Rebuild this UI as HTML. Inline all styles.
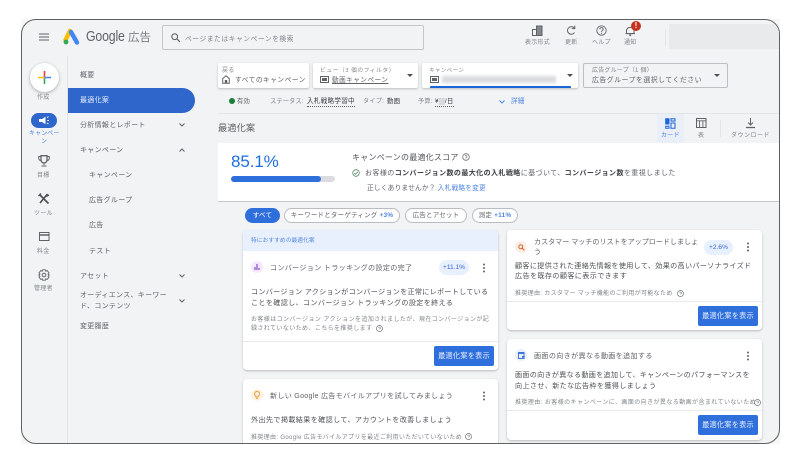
<!DOCTYPE html>
<html lang="ja"><head><meta charset="utf-8">
<style>
html,body{margin:0;padding:0;background:#fff;width:800px;height:464px;overflow:hidden}
body{font-family:"Liberation Sans","Noto Sans CJK JP",sans-serif;position:relative}
#o{position:absolute;left:21px;top:19px;width:759px;height:425px;background:#f6f6f6;filter:blur(.3px)}
#f{position:absolute;left:0;top:0;width:757px;height:423px;border:1px solid #5f6061;border-radius:15px;background:#f1f3f5;overflow:hidden}
#c{position:absolute;left:-22px;top:-20px;width:800px;height:464px}
.t{position:absolute;white-space:nowrap;transform:translateY(calc(-50% + 2px));line-height:12px;color:#5f6368;font-size:7px;letter-spacing:.25px}
.b{position:absolute;box-sizing:border-box}
.card{position:absolute;background:#fff;border-radius:4px;box-shadow:0 1px 2px rgba(60,64,67,.3)}
.n{font-size:7px;letter-spacing:.3px;color:#5f6368}
.r{font-size:6px;letter-spacing:.4px;color:#80868b}
.d{font-size:7.1px;letter-spacing:.28px;color:#4d5156}
.rl{font-size:6px;letter-spacing:.25px;color:#80868b;text-align:center}
.btn{position:absolute;width:60px;height:20px;background:#2f6fdc;border-radius:2px;color:#e8f0fe;font-size:7.2px;letter-spacing:.2px;line-height:20px;text-align:center}
.chip{position:absolute;height:15px;line-height:14px;border:1px solid #b9bcc0;border-radius:8px;box-sizing:border-box;background:#fff;color:#5f6368;font-size:6.5px;letter-spacing:.2px;text-align:center;white-space:nowrap}
.up{position:absolute;height:15px;background:#e8f0fe;border-radius:8px;color:#3367d6;font-size:6.6px;line-height:15px;text-align:center}
.k{position:absolute;width:2px;height:2px;background:#5f6368;border-radius:1px;box-shadow:0 -3.5px 0 #5f6368,0 3.5px 0 #5f6368}
.ic{position:absolute;width:12px;height:12px;border-radius:6px}
svg{position:absolute;overflow:visible}
.blue{color:#4f86e0}
</style></head><body>
<div id="o"><div id="f"><div id="c">

<!-- header -->
<svg style="left:39px;top:33px" width="10" height="8"><path d="M0 1H10M0 4H10M0 7H10" stroke="#5f6368" stroke-width="1"/></svg>
<svg style="left:63px;top:30px" width="17" height="15" viewBox="0 0 17 15"><path d="M7 1L2.5 10" stroke="#fbbc04" stroke-width="4.4" stroke-linecap="round"/><path d="M8 2L14 12.5" stroke="#4285f4" stroke-width="4.4" stroke-linecap="round"/><circle cx="3" cy="12" r="2.4" fill="#34a853"/></svg>
<div class="t" style="left:86px;top:37px;font-size:14.5px;letter-spacing:-.2px;color:#5f6368;transform:translateY(-50%) scaleX(.85);transform-origin:left center">Google</div>
<div class="t" style="left:128px;top:36px;font-size:11.5px;color:#7a7e83;letter-spacing:0">広告</div>
<div class="b" style="left:162px;top:25px;width:262px;height:25px;border:1px solid #c4c7ca;border-radius:2px"></div>
<svg style="left:171px;top:33px" width="10" height="10"><circle cx="3.7" cy="3.7" r="2.9" fill="none" stroke="#5f6368" stroke-width="1.1"/><path d="M5.8 5.8L9 9" stroke="#5f6368" stroke-width="1.2"/></svg>
<div class="t" style="left:185px;top:38px;font-size:6.8px;letter-spacing:.5px;color:#80868b">ページまたはキャンペーンを検索</div>

<svg style="left:532px;top:25px" width="11" height="11"><path d="M.5 4.5H4.5V10.5H.5ZM4.5 1H10V10.5H4.5Z" fill="none" stroke="#5f6368" stroke-width="1"/><path d="M5 1.5H9.5V10H5Z" fill="#5f6368" opacity=".75"/></svg>
<div class="t rl" style="left:525px;top:41px">表示形式</div>
<svg style="left:566px;top:25px" width="11" height="11"><path d="M8.5 7.5A3.8 3.8 0 1 1 8.2 3" fill="none" stroke="#5f6368" stroke-width="1"/><path d="M8.8 .6V3.6H5.8" fill="none" stroke="#5f6368" stroke-width="1"/></svg>
<div class="t rl" style="left:565px;top:41px">更新</div>
<svg style="left:596px;top:25px" width="11" height="11"><circle cx="5.5" cy="5.5" r="4.7" fill="none" stroke="#5f6368" stroke-width=".9"/><path d="M3.9 4.2A1.6 1.6 0 1 1 6.2 5.6C5.6 6 5.5 6.2 5.5 6.9" fill="none" stroke="#5f6368" stroke-width=".9"/><circle cx="5.5" cy="8.2" r=".6" fill="#5f6368"/></svg>
<div class="t rl" style="left:592px;top:41px">ヘルプ</div>
<svg style="left:625px;top:25px" width="11" height="11"><path d="M1.5 8.5V5A4 4 0 0 1 9 5V8.5Z" fill="none" stroke="#5f6368" stroke-width="1"/><path d="M.5 8.6H10" stroke="#5f6368"/><circle cx="5.2" cy="10.3" r="1" fill="#5f6368"/></svg>
<div class="b" style="left:631px;top:21px;width:10px;height:10px;border-radius:5px;background:#c5301f;color:#fff;font-size:8px;font-weight:bold;line-height:10px;text-align:center">!</div>
<div class="t rl" style="left:624px;top:41px">通知</div>
<div class="b" style="left:665px;top:29px;width:1px;height:17px;background:#e3e5e7"></div>
<div class="b" style="left:669px;top:24px;width:112px;height:25px;background:#e9eaeb"></div>

<!-- rail -->
<div class="b" style="left:67px;top:56px;width:1px;height:390px;background:#e1e3e6"></div>
<div class="b" style="left:30px;top:63px;width:29px;height:29px;border-radius:15px;background:#fff;box-shadow:0 1px 3px rgba(60,64,67,.4)"></div>
<svg style="left:38px;top:71px" width="13" height="13"><path d="M6.5 0V6.5" stroke="#ea4335" stroke-width="1.6"/><path d="M6.5 6.5V13" stroke="#34a853" stroke-width="1.6"/><path d="M0 6.5H6.5" stroke="#fbbc04" stroke-width="1.6"/><path d="M6.5 6.5H13" stroke="#4285f4" stroke-width="1.6"/></svg>
<div class="t rl" style="left:37px;top:96px">作成</div>
<div class="b" style="left:31px;top:113px;width:26px;height:15px;border-radius:8px;background:#2f66cc"></div>
<svg style="left:38px;top:116px" width="12" height="9"><path d="M1 3H4L7.5 .7V8.3L4 6H1Z" fill="#fff"/><path d="M9 1.5L10.5.7M9.3 4.5H11M9 7L10.5 8" stroke="#fff" stroke-width=".9"/></svg>
<div class="t rl" style="left:29px;top:132px;color:#4f86e0;letter-spacing:.1px">キャンペー</div>
<div class="t rl" style="left:41px;top:140px;color:#4f86e0">ン</div>
<svg style="left:38px;top:155px" width="12" height="12"><path d="M3 .7H9V5A3 3 0 0 1 3 5Z" fill="none" stroke="#5f6368" stroke-width="1.3"/><path d="M3 1.5H.7V3.3A2.3 2.3 0 0 0 3 5.5M9 1.5H11.3V3.3A2.3 2.3 0 0 1 9 5.5M6 8V10M3.5 11H8.5" fill="none" stroke="#5f6368" stroke-width="1"/></svg>
<div class="t rl" style="left:37px;top:174px">目標</div>
<svg style="left:38px;top:193px" width="12" height="12"><path d="M1.5 1.5L10.5 10.5M9.5 1L2 10" stroke="#4d5156" stroke-width="1.7"/><path d="M.5 3L3 .5M8 3.5L11 2" stroke="#4d5156" stroke-width="1.4"/></svg>
<div class="t rl" style="left:34px;top:212px">ツール</div>
<svg style="left:39px;top:232px" width="11" height="10"><rect x=".5" y=".5" width="9.5" height="8" fill="none" stroke="#5f6368"/><path d="M.5 3H10" stroke="#5f6368" stroke-width="1.6"/></svg>
<div class="t rl" style="left:37px;top:250px">料金</div>
<svg style="left:38px;top:269px" width="12" height="12" viewBox="0 0 12 12"><circle cx="6" cy="6" r="1.8" fill="none" stroke="#5f6368"/><path d="M4.6 .8H7.4L7.8 2.2 9.2 1.6 11 3.9 10 5 11.2 6 10 7.2 11 8.2 9.2 10.4 7.8 9.8 7.4 11.2H4.6L4.2 9.8 2.8 10.4 1 8.2 2 7.2.8 6 2 5 1 3.9 2.8 1.6 4.2 2.2Z" fill="none" stroke="#5f6368" stroke-width=".9"/></svg>
<div class="t rl" style="left:34px;top:287px">管理者</div>

<!-- nav -->
<div class="b" style="left:68px;top:88px;width:127px;height:25px;background:#2f66cc;border-radius:0 13px 13px 0"></div>
<div class="t n" style="left:80px;top:74px">概要</div>
<div class="t n" style="left:80px;top:99px;color:#e8f0fe">最適化案</div>
<div class="t n" style="left:80px;top:124px">分析情報とレポート</div>
<div class="t n" style="left:80px;top:149px">キャンペーン</div>
<div class="t n" style="left:89px;top:174px">キャンペーン</div>
<div class="t n" style="left:89px;top:199px">広告グループ</div>
<div class="t n" style="left:89px;top:224px">広告</div>
<div class="t n" style="left:89px;top:250px">テスト</div>
<div class="t n" style="left:80px;top:275px">アセット</div>
<div class="t n" style="left:80px;top:294px">オーディエンス、キーワー</div>
<div class="t n" style="left:80px;top:305px">ド、コンテンツ</div>
<div class="t n" style="left:80px;top:325px">変更履歴</div>
<svg style="left:179px;top:123px" width="6" height="4"><path d="M.5.5L3 3 5.5.5" fill="none" stroke="#5f6368"/></svg>
<svg style="left:179px;top:148px" width="6" height="4"><path d="M.5 3.5L3 1 5.5 3.5" fill="none" stroke="#5f6368"/></svg>
<svg style="left:179px;top:274px" width="6" height="4"><path d="M.5.5L3 3 5.5.5" fill="none" stroke="#5f6368"/></svg>
<svg style="left:179px;top:299px" width="6" height="4"><path d="M.5.5L3 3 5.5.5" fill="none" stroke="#5f6368"/></svg>

<!-- filters -->
<div class="card" style="left:218px;top:63px;width:91px;height:25px;border-radius:2px"></div>
<div class="t" style="left:222px;top:69px;font-size:6px;color:#80868b">戻る</div>
<svg style="left:222px;top:75px" width="8" height="9"><path d="M.7 3.5L4 .8 7.3 3.5V8.3H.7Z" fill="none" stroke="#5f6368"/><rect x="2.8" y="5" width="2.4" height="3.3" fill="#5f6368"/></svg>
<div class="t" style="left:235px;top:79px;font-size:6.7px;letter-spacing:.5px">すべてのキャンペーン</div>
<div class="card" style="left:313px;top:63px;width:105px;height:25px;border-radius:2px"></div>
<div class="t" style="left:320px;top:69px;font-size:5.8px;letter-spacing:.5px;color:#80868b">ビュー（3 個のフィルタ）</div>
<svg style="left:320px;top:76px" width="9" height="7"><rect x=".5" y=".5" width="8" height="6" fill="none" stroke="#5f6368"/><rect x="2" y="2" width="5" height="3" fill="#5f6368"/></svg>
<div class="t" style="left:332px;top:79px;font-size:6.6px;letter-spacing:.5px;text-decoration:underline">動画キャンペーン</div>
<svg style="left:407px;top:74px" width="6" height="3"><path d="M0 0H6L3 3Z" fill="#4d5156"/></svg>
<div class="card" style="left:422px;top:63px;width:156px;height:25px;border-radius:2px"></div>
<div class="t" style="left:429px;top:69px;font-size:5.6px;letter-spacing:.3px;color:#80868b">キャンペーン</div>
<svg style="left:430px;top:76px" width="9" height="7"><rect x=".5" y=".5" width="8" height="6" fill="none" stroke="#5f6368"/><rect x="2" y="2" width="5" height="3" fill="#5f6368"/></svg>
<div class="b" style="left:442px;top:76px;width:114px;height:7px;background:#d9dbde;filter:blur(1.5px)"></div>
<svg style="left:567px;top:74px" width="6" height="3"><path d="M0 0H6L3 3Z" fill="#4d5156"/></svg>
<div class="b" style="left:430px;top:86px;width:141px;height:2px;background:#1a66d8;border-radius:1px 1px 0 0"></div>
<div class="b" style="left:583px;top:63px;width:145px;height:25px;border:1px solid #bcbfc3;border-radius:2px"></div>
<div class="t" style="left:592px;top:69px;font-size:6px;letter-spacing:.2px;color:#80868b">広告グループ（1 個）</div>
<div class="t" style="left:592px;top:79px;font-size:6.9px;letter-spacing:.5px">広告グループを選択してください</div>
<svg style="left:714px;top:74px" width="6" height="3"><path d="M0 0H6L3 3Z" fill="#4d5156"/></svg>

<!-- status -->
<div class="b" style="left:229px;top:98px;width:6px;height:6px;border-radius:3px;background:#188038"></div>
<div class="t" style="left:237px;top:100px;font-size:6.3px">有効</div>
<div class="t" style="left:270px;top:100px;font-size:6.3px;letter-spacing:.05px;color:#80868b">ステータス:</div>
<div class="t" style="left:307px;top:100px;font-size:6.6px;color:#3c4043;border-bottom:1px dotted #5f6368;line-height:9px">入札戦略学習中</div>
<div class="t" style="left:363px;top:100px;font-size:6.2px;color:#80868b">タイプ:</div>
<div class="t" style="left:387px;top:100px;font-size:6.4px;color:#3c4043">動画</div>
<div class="t" style="left:418px;top:100px;font-size:6.2px;color:#80868b">予算:</div>
<div class="t" style="left:435px;top:100px;font-size:6.4px;color:#3c4043;border-bottom:1px dotted #5f6368;line-height:9px">¥<span style="color:#c4c7ca;background:#d8dadd">&nbsp;&nbsp;&nbsp;</span>/日</div>
<svg style="left:499px;top:100px" width="6" height="4"><path d="M.5.5L3 3 5.5.5" fill="none" stroke="#4f86e0"/></svg>
<div class="t blue" style="left:511px;top:100px;font-size:6.6px">詳細</div>
<div class="b" style="left:218px;top:113px;width:563px;height:1px;background:#e3e5e8"></div>

<!-- title -->
<div class="t" style="left:218px;top:126px;font-size:9.2px;letter-spacing:.1px">最適化案</div>
<div class="b" style="left:657px;top:114px;width:27px;height:29px;background:#e9eef7"></div>
<svg style="left:665px;top:118px" width="11" height="11"><path d="M.7.7H4V6H.7ZM6 .7H10V3H6ZM.7 8.2H4V10.3H.7ZM6 5H10V10.3H6Z" fill="none" stroke="#1a66d8" stroke-width="1"/><path d="M.7.7H4V6H.7Z" fill="#1a66d8"/></svg>
<div class="t rl" style="left:661px;top:134px;color:#4f86e0;letter-spacing:.3px">カード</div>
<svg style="left:696px;top:118px" width="11" height="11"><rect x=".5" y=".5" width="9.5" height="9" fill="none" stroke="#5f6368"/><path d="M.5 2.8H10M3.6 2.8V9.5M6.9 2.8V9.5" stroke="#5f6368" stroke-width=".9"/></svg>
<div class="t rl" style="left:698px;top:134px">表</div>
<div class="b" style="left:720px;top:120px;width:1px;height:17px;background:#e3e5e8"></div>
<svg style="left:745px;top:118px" width="11" height="11"><path d="M5.5 0V6.5M3 4.5L5.5 7 8 4.5" fill="none" stroke="#5f6368"/><path d="M1 9.5H10" stroke="#5f6368" stroke-width="1.3"/></svg>
<div class="t rl" style="left:731px;top:134px;letter-spacing:.5px">ダウンロード</div>

<!-- score -->
<div class="b" style="left:218px;top:143px;width:563px;height:59px;background:#fff;border-bottom:1px solid #c6c9cc"></div>
<div class="t" style="left:231px;top:160px;font-size:17px;letter-spacing:-.1px;color:#1f6fe0">85.1%</div>
<div class="b" style="left:231px;top:176px;width:104px;height:6px;border-radius:3px;background:#dadce0"></div>
<div class="b" style="left:231px;top:176px;width:90px;height:6px;border-radius:3px;background:#2f6fdc"></div>
<div class="t" style="left:352px;top:156px;font-size:8px;letter-spacing:.23px;color:#4d5156">キャンペーンの最適化スコア</div>
<svg style="left:462px;top:153px" width="8" height="8"><circle cx="4" cy="4" r="3.3" fill="none" stroke="#6f7378" stroke-width=".8"/><path d="M2.9 3.1A1.1 1.1 0 1 1 4 4.6V5" fill="none" stroke="#6f7378" stroke-width=".7"/><circle cx="4" cy="5.9" r=".4" fill="#6f7378"/></svg>
<svg style="left:352px;top:169px" width="8" height="8"><circle cx="4" cy="4" r="3.3" fill="none" stroke="#5a8f6a" stroke-width=".8"/><path d="M2.3 4L3.6 5.3 5.8 2.8" fill="none" stroke="#5a8f6a" stroke-width=".8"/></svg>
<div class="t" style="left:365px;top:172px;font-size:7px;letter-spacing:.42px;color:#5f6368">お客様の<b style="color:#3c4043">コンバージョン数の最大化の入札戦略</b>に基づいて、<b style="color:#3c4043">コンバージョン数</b>を重視しました</div>
<div class="t" style="left:367px;top:187px;font-size:6.7px;letter-spacing:.2px;color:#5f6368">正しくありませんか？ <span class="blue">入札戦略を変更</span></div>

<!-- chips -->
<div class="chip" style="left:245px;top:208px;width:35px;background:#2f6fdc;border:0;color:#fff;line-height:15px">すべて</div>
<div class="chip" style="left:284px;top:208px;width:116px">キーワードとターゲティング <b class="blue">+3%</b></div>
<div class="chip" style="left:405px;top:208px;width:62px">広告とアセット</div>
<div class="chip" style="left:472px;top:208px;width:46px">測定 <b class="blue">+11%</b></div>

<!-- left card 1 -->
<div class="card" style="left:243px;top:230px;width:255px;height:140px;overflow:hidden">
 <div class="b" style="left:0;top:0;width:255px;height:21px;background:#e8f0fe"></div>
 <div class="b" style="left:0;top:111px;width:255px;height:1px;background:#e8eaed"></div>
</div>
<div class="t blue" style="left:251px;top:239px;font-size:5.7px;letter-spacing:.1px">特におすすめの最適化案</div>
<div class="ic" style="left:251px;top:261px;background:#f3e8fd"></div>
<svg style="left:254px;top:264px" width="6" height="6"><path d="M1 6V3M3 6V0M5 6V4" stroke="#6a2bc4" stroke-width="1"/></svg>
<div class="t d" style="left:270px;top:266px;letter-spacing:.3px;color:#5f6368">コンバージョン トラッキングの設定の完了</div>
<div class="up" style="left:439px;top:260px;width:30px">+11.1%</div>
<div class="k" style="left:483px;top:267px"></div>
<div class="t d" style="left:251px;top:290px">コンバージョン アクションがコンバージョンを正常にレポートしている</div>
<div class="t d" style="left:251px;top:301px;letter-spacing:.33px">ことを確認し、コンバージョン トラッキングの設定を終える</div>
<div class="t r" style="left:251px;top:318px">お客様はコンバージョン アクションを追加されましたが、現在コンバージョンが記</div>
<div class="t r" style="left:251px;top:327px">録されていないため、こちらを推奨します</div>
<svg style="left:376px;top:325px" width="7" height="7"><circle cx="3.5" cy="3.5" r="3" fill="none" stroke="#6f7378" stroke-width=".7"/><path d="M2.5 2.7A1 1 0 1 1 3.5 4V4.4" fill="none" stroke="#6f7378" stroke-width=".6"/></svg>
<div class="btn" style="left:434px;top:346px">最適化案を表示</div>

<!-- left card 2 -->
<div class="card" style="left:243px;top:379px;width:255px;height:90px"></div>
<div class="ic" style="left:251px;top:389px;background:#fef3e0"></div>
<svg style="left:254px;top:391px" width="6" height="8"><path d="M3 .5A2.4 2.4 0 0 1 4.2 5V6H1.8V5A2.4 2.4 0 0 1 3 .5ZM2 7.4H4" fill="none" stroke="#f09a37" stroke-width=".9"/></svg>
<div class="t d" style="left:270px;top:394px;letter-spacing:.26px;color:#5f6368">新しい Google 広告モバイルアプリを試してみましょう</div>
<div class="k" style="left:483px;top:395px"></div>
<div class="t d" style="left:251px;top:418px;letter-spacing:.37px">外出先で掲載結果を確認して、アカウントを改善しましょう</div>
<div class="t r" style="left:251px;top:436px;letter-spacing:.34px">推奨理由: Google 広告モバイルアプリを最近ご利用いただいていないため</div>
<svg style="left:465px;top:433px" width="7" height="7"><circle cx="3.5" cy="3.5" r="3" fill="none" stroke="#6f7378" stroke-width=".7"/><path d="M2.5 2.7A1 1 0 1 1 3.5 4V4.4" fill="none" stroke="#6f7378" stroke-width=".6"/></svg>

<!-- right card 1 -->
<div class="card" style="left:507px;top:230px;width:255px;height:100px"><div class="b" style="left:0;top:71px;width:255px;height:1px;background:#e8eaed"></div></div>
<div class="ic" style="left:515px;top:241px;background:#fdeee3"></div>
<svg style="left:518px;top:244px" width="7" height="7"><circle cx="2.8" cy="2.8" r="2" fill="none" stroke="#c5581c" stroke-width=".9"/><path d="M4.3 4.3L6.4 6.4" stroke="#c5581c"/></svg>
<div class="t d" style="left:534px;top:240px;letter-spacing:-.04px;color:#5f6368">カスタマー マッチのリストをアップロードしましょ</div>
<div class="t d" style="left:534px;top:250px;color:#5f6368">う</div>
<div class="up" style="left:704px;top:240px;width:29px">+2.6%</div>
<div class="k" style="left:747px;top:246px"></div>
<div class="t d" style="left:515px;top:264px;letter-spacing:.32px">顧客に提供された連絡先情報を使用して、効果の高いパーソナライズド</div>
<div class="t d" style="left:515px;top:274px;letter-spacing:.38px">広告を既存の顧客に表示できます</div>
<div class="t r" style="left:515px;top:292px;letter-spacing:.32px">推奨理由: カスタマー マッチ機能のご利用が可能なため</div>
<svg style="left:677px;top:290px" width="7" height="7"><circle cx="3.5" cy="3.5" r="3" fill="none" stroke="#6f7378" stroke-width=".7"/><path d="M2.5 2.7A1 1 0 1 1 3.5 4V4.4" fill="none" stroke="#6f7378" stroke-width=".6"/></svg>
<div class="btn" style="left:698px;top:306px">最適化案を表示</div>

<!-- right card 2 -->
<div class="card" style="left:507px;top:339px;width:255px;height:101px"><div class="b" style="left:0;top:71px;width:255px;height:1px;background:#e8eaed"></div></div>
<div class="ic" style="left:515px;top:349px;background:#e8f0fe"></div>
<svg style="left:518px;top:352px" width="7" height="7"><rect x=".5" y=".5" width="5.5" height="6" fill="none" stroke="#3367d6" stroke-width=".9"/><path d="M.5 1.3H6" stroke="#3367d6" stroke-width="1.2"/><rect x="4" y="4" width="2.6" height="1.6" fill="#3367d6"/></svg>
<div class="t d" style="left:534px;top:354px;letter-spacing:.33px;color:#5f6368">画面の向きが異なる動画を追加する</div>
<div class="k" style="left:747px;top:355px"></div>
<div class="t d" style="left:515px;top:373px">画面の向きが異なる動画を追加して、キャンペーンのパフォーマンスを</div>
<div class="t d" style="left:515px;top:384px;letter-spacing:.35px">向上させ、新たな広告枠を獲得しましょう</div>
<div class="t r" style="left:515px;top:401px;letter-spacing:.42px">推奨理由: お客様のキャンペーンに、画面の向きが異なる動画が含まれていないため</div>
<svg style="left:754px;top:399px" width="7" height="7"><circle cx="3.5" cy="3.5" r="3" fill="none" stroke="#6f7378" stroke-width=".7"/><path d="M2.5 2.7A1 1 0 1 1 3.5 4V4.4" fill="none" stroke="#6f7378" stroke-width=".6"/></svg>
<div class="btn" style="left:698px;top:415px">最適化案を表示</div>

</div></div></div>
</body></html>
